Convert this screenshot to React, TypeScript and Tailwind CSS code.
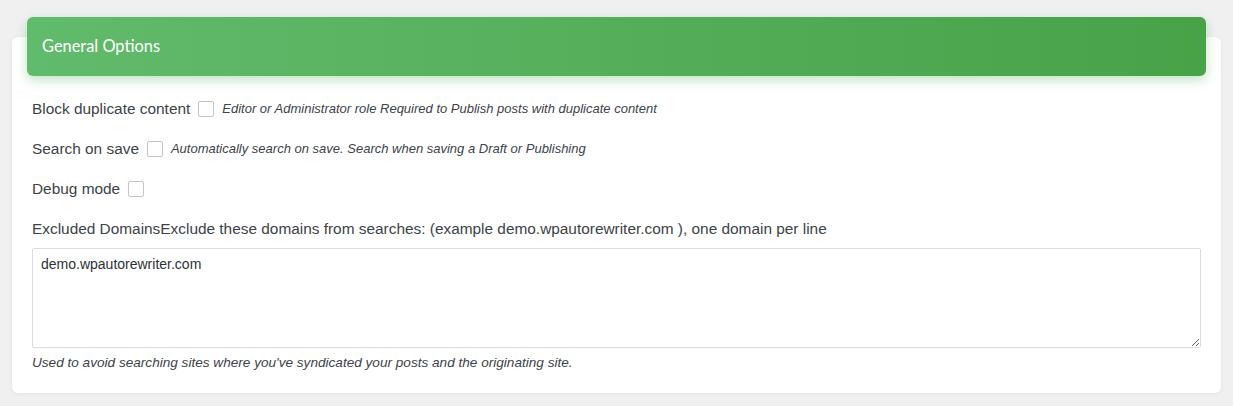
import { useState } from 'react'

const ROWS = [
  { label: 'Block duplicate content', note: 'Editor or Administrator role Required to Publish posts with duplicate content' },
  { label: 'Search on save', note: 'Automatically search on save. Search when saving a Draft or Publishing' },
  { label: 'Debug mode', note: '' },
]

export default function App() {
  const [checks, setChecks] = useState<boolean[]>([false, false, false])
  const [domains, setDomains] = useState('demo.wpautorewriter.com')

  return (
    <div className="min-h-[406px] bg-[#f0f0f1] px-3 pt-[37px] pb-[14px] text-[#3c434a] [font-family:'Liberation_Sans',Arial,sans-serif]">
      <div className="flow-root bg-white rounded-md shadow-[0_1px_4px_rgba(0,0,0,0.06)] pb-[21px]">
        {/* Header */}
        <div className="-mt-5 mx-[15px] h-[59px] rounded-md flex items-center px-[15px] bg-[linear-gradient(90deg,#61bb6c,#48a248)] shadow-[0_4px_12px_rgba(76,175,80,0.35)]">
          <h2 className="text-white text-[16.4px] [font-family:Lato,'Noto_Sans',sans-serif]">General Options</h2>
        </div>

        {/* Body */}
        <div className="px-5 pt-[23px]">
          {ROWS.map((r, i) => (
            <div key={r.label} className="flex items-center h-5 mb-5">
              <span className="text-[15.4px]">{r.label}</span>
              <input type="checkbox" checked={checks[i]}
                onChange={() => setChecks(c => c.map((v, j) => (j === i ? !v : v)))}
                className="ml-2 w-4 h-4 appearance-none border border-[#c3c4c7] rounded-[2px] bg-white checked:bg-[#48a248]" />
              {r.note && <span className="ml-2 text-[13px] italic">{r.note}</span>}
            </div>
          ))}

          <div className="text-[15.4px] leading-5 mt-[1px] mb-[9px]">
            Excluded DomainsExclude these domains from searches: (example demo.wpautorewriter.com ), one domain per line
          </div>
          <textarea value={domains} onChange={e => setDomains(e.target.value)}
            className="block w-full h-[100px] border border-[#dcdcde] rounded-[2px] px-2 py-[5px] text-[14px] text-[#2c3338] focus:outline-none" />
          <p className="mt-[6px] text-[13.6px] leading-[18px] italic">
            Used to avoid searching sites where you've syndicated your posts and the originating site.
          </p>
        </div>
      </div>
    </div>
  )
}
